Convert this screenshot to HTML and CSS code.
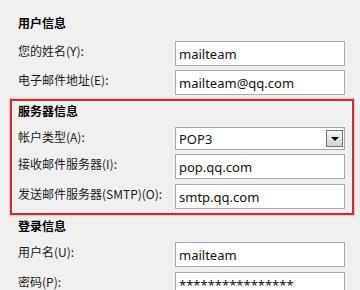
FILE: index.html
```html
<!DOCTYPE html>
<html lang="zh-CN">
<head>
  <meta charset="UTF-8">
  <title>帐户设置</title>
  <meta name="viewport" content="width=device-width, initial-scale=1.0">
  <link rel="stylesheet" href="styles.css">
</head>
<body>

  <div class="panel">
    <div class="group first">
      <h3>用户信息</h3>
      <div class="row">
        <label>您的姓名(Y):</label>
        <input class="field" type="text" value="mailteam">
      </div>
      <div class="row">
        <label>电子邮件地址(E):</label>
        <input class="field" type="text" value="mailteam@qq.com">
      </div>
    </div>

    <div class="group server">
      <h3>服务器信息</h3>
      <div class="row select-row">
        <label>帐户类型(A):</label>
        <div class="select">
          <span>POP3</span>
          <span class="drop"><i></i></span>
        </div>
      </div>
      <div class="row">
        <label>接收邮件服务器(I):</label>
        <input class="field" type="text" value="pop.qq.com">
      </div>
      <div class="row">
        <label>发送邮件服务器(SMTP)(O):</label>
        <input class="field" type="text" value="smtp.qq.com">
      </div>
    </div>

    <div class="group login">
      <h3>登录信息</h3>
      <div class="row">
        <label>用户名(U):</label>
        <input class="field" type="text" value="mailteam">
      </div>
      <div class="row">
        <label>密码(P):</label>
        <input class="field" type="text" value="****************">
      </div>
    </div>
  </div>

</body>
</html>
```

FILE: styles.css
```css
body {
  margin: 0;
  background: #f0f0f0;
  font-family: "Noto Sans CJK SC", "Noto Sans", sans-serif;
  color: #1a1a1a;
  overflow: hidden;
}

.panel {
  padding: 15px 15px 0 18px;
}

h3 {
  margin: 0;
  font-size: 12px;
  line-height: 16px;
  font-weight: bold;
  color: #000;
}

.group.first h3 {
  margin-bottom: 10px;
}

.row {
  display: flex;
  align-items: center;
  height: 25px;
  margin-bottom: 5px;
}

.group.first .row {
  margin-bottom: 4px;
}

.row label {
  width: 157px;
  padding-bottom: 6px;
  font-size: 12px;
  line-height: 16px;
  white-space: nowrap;
}

.field {
  box-sizing: border-box;
  width: 170px;
  height: 25px;
  margin: 0;
  padding: 0 3px;
  border: 1px solid #a9a9a9;
  background: #fff;
  font-family: "Noto Sans", sans-serif;
  font-size: 13px;
  color: #111;
  outline: none;
}

.server {
  margin: 1px -9px 0 -8px;
  padding: 2px 7px 0 6px;
  border: 2px solid #c42f3b;
  box-shadow: 0 0 1px 1px rgba(230, 120, 130, 0.35);
}

.server h3 {
  margin-bottom: 8px;
}

.server .row:last-child {
  margin-bottom: 4px;
}

.select-row {
  height: 23px;
  margin-bottom: 4px;
}

.select-row label {
  padding-bottom: 4px;
}

.select {
  box-sizing: border-box;
  width: 170px;
  height: 23px;
  display: flex;
  align-items: center;
  justify-content: space-between;
  padding: 0 1px 0 3px;
  border: 1px solid #a9a9a9;
  background: #fff;
  font-family: "Noto Sans", sans-serif;
  font-size: 13px;
  color: #111;
}

.drop {
  box-sizing: border-box;
  width: 17px;
  height: 17px;
  display: flex;
  align-items: center;
  justify-content: center;
  border: 1px solid #707070;
  background: linear-gradient(to bottom, #f4f4f4, #d2d2d2);
}

.drop i {
  width: 0;
  height: 0;
  border-left: 4px solid transparent;
  border-right: 4px solid transparent;
  border-top: 4px solid #000;
  margin-top: 1px;
}

.login h3 {
  margin: 3px 0 8px;
}
```
